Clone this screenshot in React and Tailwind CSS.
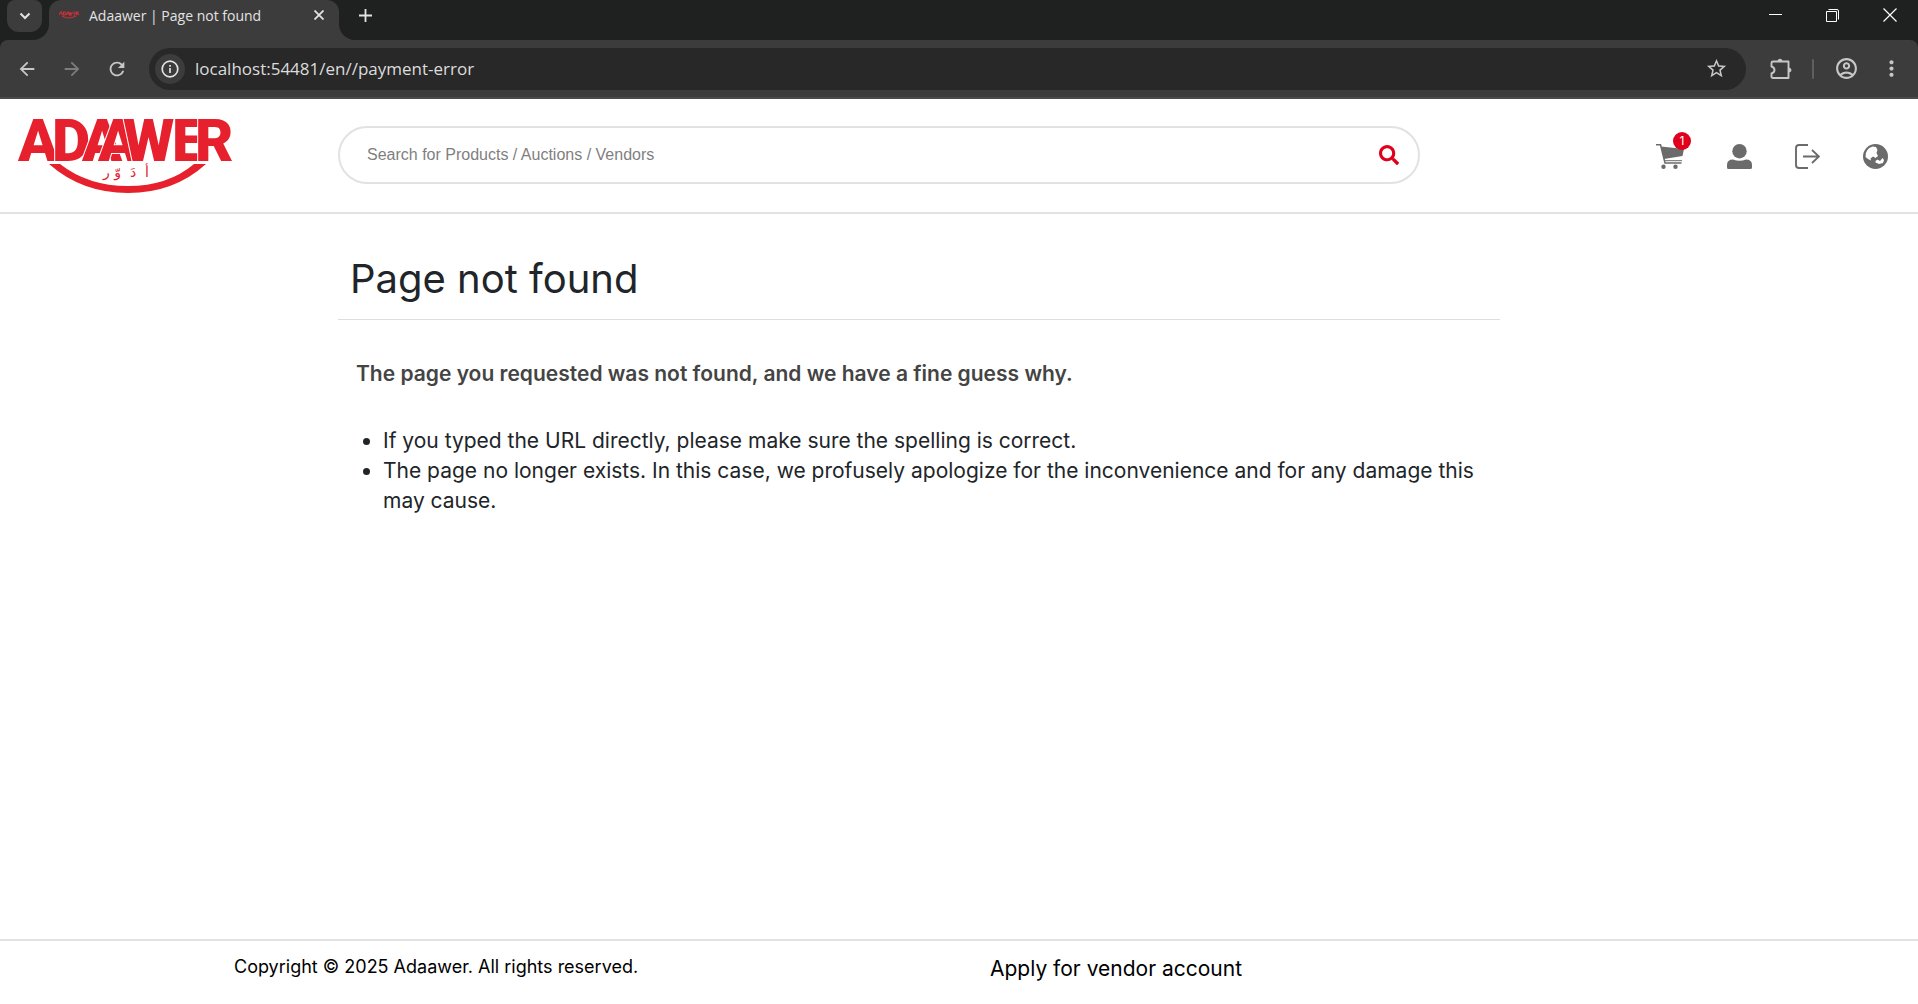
import React from "react";
import { FaSearch } from "react-icons/fa";
import {
  MdArrowBack,
  MdArrowForward,
  MdRefresh,
  MdStarBorder,
  MdMoreVert,
  MdOutlineAccountCircle,
} from "react-icons/md";

function Logo() {
  return (
    <svg className="h-[76px] w-[216px] overflow-visible" viewBox="0 0 216 76" role="img" aria-label="Adaawer">
      <text
        x="0 34 64 80 105 154 177"
        y="43"
        fill="#e6202c"
        stroke="#fff"
        strokeWidth="2"
        paintOrder="stroke"
        fontFamily="Roboto, sans-serif"
        fontWeight="900"
        fontSize="59"
      >
        ADAAWER
      </text>
      <path d="M31 46H42Q70 68 110 68Q150 68 176 46H188Q156 75 110 75Q64 75 31 46Z" fill="#e6202c" />
      <text x="108" y="59" direction="rtl" textAnchor="middle" fill="#e6202c" fontFamily='"DejaVu Sans", sans-serif' fontSize="14">
        {"أ\u00a0\u00a0دَ\u00a0\u00a0وّ\u00a0ر"}
      </text>
    </svg>
  );
}

function TabStrip() {
  return (
    <div className="flex h-10 bg-[#1f2120] text-[#e3e3e3]">
      <div className="flex w-[49px] shrink-0 items-end bg-[#3c3c3c]">
        <div className="h-10 w-full rounded-br-2xl bg-[#1f2120] pl-[7px]">
          <button aria-label="Search tabs" className="flex h-8 w-[35px] items-center justify-center rounded-b-xl rounded-t-lg bg-[#3c3c3c]">
            <svg width="12" height="8" viewBox="0 0 12 8" fill="none" stroke="currentColor" strokeWidth="2"><path d="M1.500 1.500L6 6L10.500 1.500" /></svg>
          </button>
        </div>
      </div>
      <div className="flex w-[290px] shrink-0 rounded-t-xl bg-[#3c3c3c] pb-2.5 pl-2.5 pr-[11px]">
        <div className="flex w-full items-center">
          <svg width="20" height="8" viewBox="0 0 20 8" fill="none" stroke="#c9303a" strokeWidth="1.200">
            <path d="M0 4L2 .8L3.500 4M4.500 1V4H6L7 2.500L6 1ZM7.500 4L9 1L10.500 4L11 1L12 4L13.500 1M14.500 1H16.500M14.500 2.500H16.500M14.500 4H16.500M17.500 4V1H19L18.500 2.500L20 4M3 5Q10 9 17 5" />
          </svg>
          <span className="ml-2.5 flex-1 whitespace-nowrap font-['Open_Sans',sans-serif] text-[14px]">Adaawer | Page not found</span>
          <button aria-label="Close tab" className="p-1">
            <svg width="10" height="10" viewBox="0 0 10 10" stroke="currentColor" strokeWidth="1.800"><path d="M0.500 0.500L9.500 9.500M9.500 0.500L0.500 9.500" /></svg>
          </button>
        </div>
      </div>
      <div className="flex flex-1 bg-[#3c3c3c]">
        <div className="flex flex-1 items-center justify-between rounded-bl-2xl bg-[#1f2120] pb-2.5 pl-5">
          <button aria-label="New tab">
            <svg width="13" height="13" viewBox="0 0 13 13" stroke="currentColor" strokeWidth="1.800"><path d="M6.500 0V13M0 6.500H13" /></svg>
          </button>
          <div className="flex items-center gap-[44px] pr-[21px] text-white">
            <button aria-label="Minimize"><svg width="13" height="13" viewBox="0 0 13 13" stroke="currentColor"><path d="M0 5.500H13" /></svg></button>
            <button aria-label="Restore">
              <svg width="13" height="13" viewBox="0 0 13 13" fill="none" stroke="currentColor"><path d="M0.500 2.500H10.500V12.500H0.500ZM2.500 .5H11Q12.500 .5 12.500 2V10.500" /></svg>
            </button>
            <button aria-label="Close window"><svg width="14" height="14" viewBox="0 0 14 14" stroke="currentColor" strokeWidth="1.200"><path d="M.5 .5L13.500 13.500M13.500 .5L.5 13.500" /></svg></button>
          </div>
        </div>
      </div>
    </div>
  );
}

function Toolbar() {
  return (
    <div className="bg-[#1f2120]">
      <div className="flex h-[59px] items-center rounded-t-lg border-b-2 border-[#4a4a4a] bg-[#3c3c3c] pl-4 pr-3.5 text-[#c7c7c7]">
        <div className="flex w-[133px] shrink-0 gap-[23px]">
          <button aria-label="Back"><MdArrowBack size={22} /></button>
          <button aria-label="Forward" className="text-[#7d7d7d]"><MdArrowForward size={22} /></button>
          <button aria-label="Reload"><MdRefresh size={22} /></button>
        </div>
        <div className="flex h-[42px] flex-1 items-center rounded-full bg-[#282828] pl-1.5 pr-[18px]">
          <button aria-label="Site information" className="flex size-[30px] items-center justify-center rounded-full bg-[#3c3c3c] text-[#e3e3e3]">
            <svg width="18" height="18" viewBox="0 0 18 18" fill="none" stroke="currentColor" strokeWidth="1.700"><circle cx="9" cy="9" r="7.800" /><path d="M9 8V13M9 5V6.700" /></svg>
          </button>
          <input
            aria-label="Address"
            defaultValue="localhost:54481/en//payment-error"
            className="ml-2.5 flex-1 bg-transparent font-['Open_Sans',sans-serif] text-[17px] text-[#dcdcdc] outline-none"
          />
          <button aria-label="Bookmark this page"><MdStarBorder size={23} /></button>
        </div>
        <div className="flex items-center pl-6">
          <button aria-label="Extensions">
            <svg width="22" height="22" viewBox="0 0 22 22" fill="none" stroke="currentColor" strokeWidth="1.900" strokeLinejoin="round">
              <path d="M3 3.500H18.500V20H3Q1.500 20 1.500 18.500V15.500Q4.500 14.500 4.500 12T1.500 8.500V5Q1.500 3.500 3 3.500Z" />
              <path d="M7.500 3Q8 .8 10 .8T12.500 3ZM19 9.500Q21.500 10 21.500 12T19 14.500Z" fill="currentColor" stroke="none" />
            </svg>
          </button>
          <div className="ml-5 h-5 w-0.5 rounded bg-[#5f5f5f]" />
          <button aria-label="Profile" className="ml-5"><MdOutlineAccountCircle size={25} /></button>
          <button aria-label="Menu" className="ml-5"><MdMoreVert size={25} /></button>
        </div>
      </div>
    </div>
  );
}

function SiteHeader() {
  return (
    <header className="flex h-[115px] items-center border-b-2 border-[#e2e2e2]">
      <div className="w-[338px] shrink-0 pl-[18px]">
        <a href="#home" className="inline-block align-middle"><Logo /></a>
      </div>
      <form role="search" className="mb-0.5 flex h-[58px] flex-1 items-center rounded-full border-2 border-[#e2e2e2] pl-[27px] pr-[19px]">
        <input
          type="text"
          aria-label="Search"
          placeholder="Search for Products / Auctions / Vendors"
          className="flex-1 font-['Liberation_Sans',sans-serif] text-base outline-none placeholder:text-[#7f7f7f]"
        />
        <button type="button" aria-label="Search" className="text-[#e0001b]"><FaSearch size={20} /></button>
      </form>
      <nav className="mt-0.5 flex w-[498px] shrink-0 items-center justify-end gap-[43px] pr-[30px] text-[#6b6b6b]">
        <a href="#cart" aria-label="Cart" className="relative">
          <svg width="28" height="25" viewBox="0 0 28 25" fill="none" stroke="currentColor" strokeWidth="1.500">
            <path d="M0 .8H4.500L9 19H25.500" /><path d="M9 16.700H26" strokeWidth="1" />
            <path d="M5 2.500L28 5L26.500 12L8 15Z" fill="currentColor" stroke="none" />
            <circle cx="7.500" cy="22.800" r="2.200" fill="currentColor" stroke="none" /><circle cx="19.500" cy="22.800" r="2.200" fill="currentColor" stroke="none" />
          </svg>
          <span className="absolute -top-3 left-[17px] flex size-[18px] items-center justify-center rounded-full bg-[#e0001b] font-['Inter',sans-serif] text-[12px] text-white">1</span>
        </a>
        <a href="#account" aria-label="Account">
          <svg width="25" height="25" viewBox="0 0 25 25" fill="currentColor"><circle cx="12.500" cy="7.200" r="7.200" /><path d="M0 21Q0 15.500 6 15.500Q12.500 18 19 15.500Q25 15.500 25 21V23.500Q25 25 23.500 25H1.500Q0 25 0 23.500Z" /></svg>
        </a>
        <a href="#logout" aria-label="Log out">
          <svg width="25" height="25" viewBox="0 0 25 25" fill="none" stroke="currentColor" strokeWidth="1.900"><path d="M13 1H4Q1 1 1 4V21Q1 24 4 24H13M8 12.500H24M17 6L24 12.500L17 19" /></svg>
        </a>
        <a href="#language" aria-label="Language">
          <svg width="25" height="25" viewBox="0 0 25 25"><circle cx="12.500" cy="12.500" r="12.500" fill="currentColor" /><path d="M2.500 13Q2 5 9.500 2.500L13 3L14.500 6L13.500 9L15 12L12.500 14L10 12.500L7.500 14.500L8 16.500L5 15ZM12.500 17L14.500 15.500L17 17L19.500 14L21 16L20 19L16 20L12.500 18.500Z" fill="#fff" /></svg>
        </a>
      </nav>
    </header>
  );
}

export default function App() {
  return (
    <div className="flex min-h-screen flex-col bg-white font-['Inter',sans-serif]">
      <TabStrip />
      <Toolbar />
      <SiteHeader />
      <main className="ml-[338px] mr-[418px] flex-1 text-[#212529]">
        <h1 className="border-b border-[#dedede] px-3 pb-[15px] pt-10 text-[40px] leading-[50px]">Page not found</h1>
        <h2 className="mt-[37px] px-[18px] text-[21px] font-semibold leading-[34px] text-[#444]">
          The page you requested was not found, and we have a fine guess why.
        </h2>
        <ul className="mt-[35px] list-disc pl-[45px] text-[21px] leading-[30px]">
          <li>If you typed the URL directly, please make sure the spelling is correct.</li>
          <li>The page no longer exists. In this case, we profusely apologize for the inconvenience and for any damage this may cause.</li>
        </ul>
      </main>
      <footer className="flex h-[65px] border-t-2 border-[#e2e2e2] pl-[234px] text-black">
        <p className="w-[756px] pt-3 text-[18px] leading-7">Copyright © 2025 Adaawer. All rights reserved.</p>
        <a href="#vendor" className="pt-3.5 text-[21px] leading-7">Apply for vendor account</a>
      </footer>
    </div>
  );
}
